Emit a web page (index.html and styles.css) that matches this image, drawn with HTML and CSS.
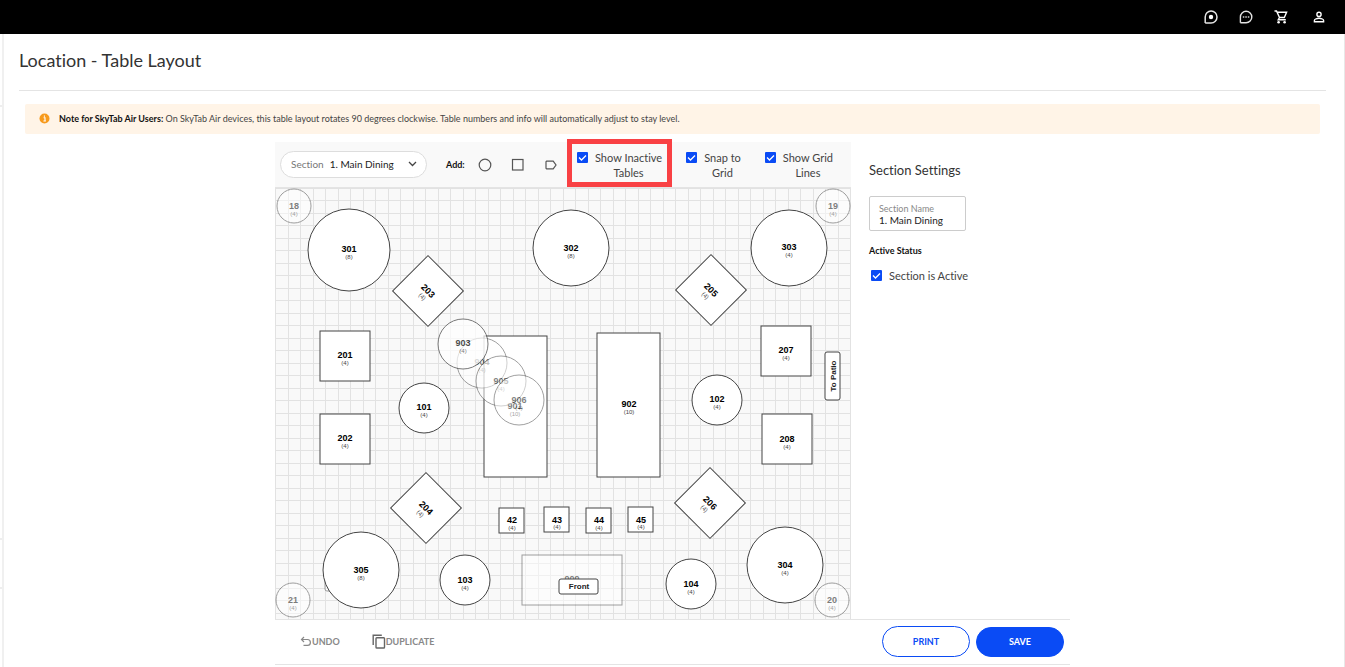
FILE: index.html
```html
<!DOCTYPE html>
<html lang="en">
<head>
<meta charset="utf-8">
<title>Location - Table Layout</title>
<meta name="viewport" content="width=device-width, initial-scale=1">
<link rel="stylesheet" href="styles.css">
</head>
<body>
<header class="topbar">
  <button class="icon-btn" type="button" aria-label="Activity"><svg width="14" height="14" viewBox="0 0 14 14"><path d="M1.2 13V7a5.9 5.9 0 1 1 5.9 5.9H1.2" fill="none" stroke="#e4e4e4" stroke-width="1.5"/><circle cx="7" cy="7" r="2.2" fill="#fff"/></svg></button>
  <button class="icon-btn" type="button" aria-label="Chat"><svg width="14" height="14" viewBox="0 0 14 14"><path d="M1.4 12.8V7a5.7 5.7 0 1 1 5.7 5.7H1.4" fill="none" stroke="#e4e4e4" stroke-width="1.4"/><path d="M3.8 6.3h1.5v1.4H3.8zM6.3 6.3h1.5v1.4H6.3zM8.8 6.3h1.5v1.4H8.8z" fill="#ccc"/></svg></button>
  <button class="icon-btn" type="button" aria-label="Cart"><svg width="14" height="14" viewBox="0 0 14 14"><path d="M.5 1h2l3 6.500h4.800L12.600 2.300H3.200M5.500 7.500 4.200 9.800h7.600" fill="none" stroke="#fff" stroke-width="1.400"/><circle cx="4.600" cy="12.300" r="1.300" fill="#fff"/><circle cx="10.600" cy="12.300" r="1.300" fill="#fff"/></svg></button>
  <button class="icon-btn" type="button" aria-label="Account"><svg width="14" height="14" viewBox="0 0 14 14"><circle cx="7" cy="4.400" r="2.100" fill="none" stroke="#fff" stroke-width="1.400"/><path d="M2.400 11.700v-1.200c0-1.500 3-2.200 4.600-2.200s4.600.7 4.600 2.200v1.200z" fill="none" stroke="#fff" stroke-width="1.400"/></svg></button>
</header>
<div class="shell">
  <nav class="rail" aria-label="Sidebar"><span class="rail-a"></span><span class="rail-b"></span><span class="rail-c"></span></nav>
  <main class="page">
    <h1 class="title">Location - Table Layout</h1>
    <p class="notice">
      <svg class="notice-icon" width="11" height="11" viewBox="0 0 11 11"><circle cx="5.500" cy="5.500" r="5" fill="#f79a1c"/><path d="M4.600 4.800h1.400v3M4.400 8h2.500M5.400 2.500v1.300" fill="none" stroke="#fff" stroke-width="1.100"/></svg>
      <span><strong>Note for SkyTab Air Users:</strong> On SkyTab Air devices, this table layout rotates 90 degrees clockwise. Table numbers and info will automatically adjust to stay level.</span>
    </p>
    <div class="editor">
      <section class="board">
        <div class="toolbar">
          <div class="section-pick">
            <label for="section">Section</label>
            <select id="section"><option>1. Main Dining</option></select>
          </div>
          <div class="add">
            <strong>Add:</strong>
            <button class="shape-btn" type="button" aria-label="Add round table"><svg width="14" height="14" viewBox="0 0 14 14"><circle cx="7" cy="7" r="5.800"/></svg></button>
            <button class="shape-btn" type="button" aria-label="Add square table"><svg width="14" height="14" viewBox="0 0 14 14"><rect x="1.500" y="1.500" width="10.500" height="10.500"/></svg></button>
            <button class="shape-btn" type="button" aria-label="Add label"><svg width="14" height="14" viewBox="0 0 14 14"><path d="M2.600 3.200h6.600l2.800 3.800-2.800 3.800H2.600l-.6-.6V3.800z"/></svg></button>
          </div>
          <div class="toggles">
            <label class="toggle highlighted"><input class="check" type="checkbox" checked><span>Show Inactive<br>Tables</span></label>
            <label class="toggle"><input class="check" type="checkbox" checked><span>Snap to<br>Grid</span></label>
            <label class="toggle"><input class="check" type="checkbox" checked><span>Show Grid<br>Lines</span></label>
          </div>
        </div>
        <svg class="floor" viewBox="0 0 576 431" role="img" aria-label="Main Dining floor plan">
          <defs>
            <pattern id="grid" width="25" height="25" patternUnits="userSpaceOnUse">
              <path class="grid-line" d="M0 0h25v1H0zM0 12h25v1H0zM0 0h1v25H0zM13 0h1v25h-1z"/>
            </pattern>
          </defs>
          <rect width="576" height="431" fill="url(#grid)"/>

          <g class="inactive"><circle cx="19" cy="18" r="17"/><text class="num" x="19" y="21">18</text><text class="seats" x="19" y="28">(4)</text></g>
          <g class="inactive"><circle cx="558" cy="18" r="17"/><text class="num" x="558" y="21">19</text><text class="seats" x="558" y="28">(4)</text></g>
          <g class="inactive"><circle cx="18" cy="412" r="17"/><text class="num" x="18" y="415">21</text><text class="seats" x="18" y="422">(4)</text></g>
          <g class="inactive"><circle cx="557" cy="412" r="17"/><text class="num" x="557" y="415">20</text><text class="seats" x="557" y="422">(4)</text></g>
          <g class="inactive"><rect x="50" y="388" width="39" height="15" rx="2"/></g>
          <g class="inactive"><rect x="247" y="367" width="100" height="50"/><text class="num" x="297" y="394">909</text></g>

          <g><circle cx="74" cy="62" r="41"/><text class="num" x="74" y="64">301</text><text class="seats" x="74" y="71">(8)</text></g>
          <g><circle cx="296" cy="60" r="38"/><text class="num" x="296" y="63">302</text><text class="seats" x="296" y="70">(8)</text></g>
          <g><circle cx="514" cy="60" r="38"/><text class="num" x="514" y="62">303</text><text class="seats" x="514" y="69">(4)</text></g>
          <g><circle cx="510" cy="377" r="38"/><text class="num" x="510" y="380">304</text><text class="seats" x="510" y="387">(4)</text></g>
          <g><circle cx="86" cy="382" r="38"/><text class="num" x="86" y="385">305</text><text class="seats" x="86" y="392">(8)</text></g>

          <g transform="translate(153 103) rotate(45)"><rect x="-25" y="-25" width="50" height="50"/><text class="num" x="0" y="3">203</text><text class="seats" x="0" y="10">(4)</text></g>
          <g transform="translate(436 102) rotate(45)"><rect x="-25" y="-25" width="50" height="50"/><text class="num" x="0" y="3">205</text><text class="seats" x="0" y="10">(4)</text></g>
          <g transform="translate(151 320) rotate(45)"><rect x="-25" y="-25" width="50" height="50"/><text class="num" x="0" y="3">204</text><text class="seats" x="0" y="10">(4)</text></g>
          <g transform="translate(435 315) rotate(45)"><rect x="-25" y="-25" width="50" height="50"/><text class="num" x="0" y="3">206</text><text class="seats" x="0" y="10">(4)</text></g>

          <g class="square"><rect x="45" y="143" width="50" height="50"/><text class="num" x="70" y="170">201</text><text class="seats" x="70" y="177">(4)</text></g>
          <g class="square"><rect x="45" y="226" width="50" height="50"/><text class="num" x="70" y="253">202</text><text class="seats" x="70" y="260">(4)</text></g>
          <g class="square"><rect x="486" y="138" width="50" height="50"/><text class="num" x="511" y="165">207</text><text class="seats" x="511" y="172">(4)</text></g>
          <g class="square"><rect x="487" y="226" width="50" height="50"/><text class="num" x="512" y="254">208</text><text class="seats" x="512" y="261">(4)</text></g>

          <g><circle cx="149" cy="220" r="25"/><text class="num" x="149" y="222">101</text><text class="seats" x="149" y="229">(4)</text></g>
          <g><circle cx="442" cy="212" r="25"/><text class="num" x="442" y="214">102</text><text class="seats" x="442" y="221">(4)</text></g>
          <g><circle cx="190" cy="392" r="25"/><text class="num" x="190" y="395">103</text><text class="seats" x="190" y="402">(4)</text></g>
          <g><circle cx="416" cy="396" r="25"/><text class="num" x="416" y="399">104</text><text class="seats" x="416" y="406">(4)</text></g>

          <g class="square"><rect x="209" y="148" width="63" height="141"/><text class="num" x="240" y="221">901</text><text class="seats" x="240" y="228">(10)</text></g>
          <g class="square"><rect x="322" y="145" width="63" height="144"/><text class="num" x="354" y="219">902</text><text class="seats" x="354" y="226">(10)</text></g>

          <g class="inactive"><circle cx="207" cy="175" r="25"/><text class="num" x="207" y="177">904</text><text class="seats" x="207" y="184">(4)</text></g>
          <g class="inactive"><circle cx="226" cy="193" r="25"/><text class="num" x="226" y="196">905</text><text class="seats" x="226" y="203">(4)</text></g>
          <g class="inactive"><circle cx="244" cy="212" r="25"/><text class="num" x="244" y="215">906</text><text class="seats" x="244" y="222">(4)</text></g>
          <g class="inactive front"><circle cx="188" cy="156" r="25"/><text class="num" x="188" y="158">903</text><text class="seats" x="188" y="165">(4)</text></g>

          <g class="square"><rect x="224" y="320" width="25" height="25"/><text class="num" x="237" y="335">42</text><text class="seats" x="237" y="342">(4)</text></g>
          <g class="square"><rect x="269" y="319" width="25" height="25"/><text class="num" x="282" y="335">43</text><text class="seats" x="282" y="341">(4)</text></g>
          <g class="square"><rect x="311" y="320" width="25" height="25"/><text class="num" x="324" y="335">44</text><text class="seats" x="324" y="342">(4)</text></g>
          <g class="square"><rect x="353" y="319" width="25" height="25"/><text class="num" x="366" y="335">45</text><text class="seats" x="366" y="341">(4)</text></g>

          <g><rect x="284" y="391" width="39" height="15" rx="2"/><text class="tag" x="304" y="401">Front</text></g>
          <g transform="translate(558 188) rotate(-90)"><rect x="-24" y="-8" width="48" height="15" rx="2"/><text class="tag" x="0" y="3">To Patio</text></g>
        </svg>
      </section>
      <aside class="settings">
        <h2 class="settings-title">Section Settings</h2>
        <div class="field">
          <label for="name">Section Name</label>
          <input id="name" type="text" value="1. Main Dining">
        </div>
        <h3 class="status-title">Active Status</h3>
        <label class="status"><input class="check" type="checkbox" checked>Section is Active</label>
      </aside>
      <footer class="actions">
        <button class="text-btn" type="button"><svg width="12" height="12" viewBox="0 0 12 12"><path d="M4 1 1.500 3.500 4 6M1.500 3.500H7.500a2.900 2.900 0 0 1 0 5.800H3.500" fill="none" stroke="#888" stroke-width="1.200"/></svg>UNDO</button>
        <button class="text-btn duplicate" type="button"><svg width="14" height="15" viewBox="0 0 14 15"><path d="M1.200 11V1.200h8.600" fill="none" stroke="#666" stroke-width="1.400"/><rect x="4" y="3.700" width="8.500" height="10.300" rx=".8" fill="none" stroke="#666" stroke-width="1.400"/></svg>DUPLICATE</button>
        <button class="pill-btn print" type="button">PRINT</button>
        <button class="pill-btn save" type="button">SAVE</button>
      </footer>
    </div>
  </main>
</div>
</body>
</html>
```
FILE: styles.css
```css
* { box-sizing: border-box; }
body {
  margin: 0;
  min-height: 100vh;
  display: flex;
  flex-direction: column;
  font-family: Lato, "Open Sans", sans-serif;
  font-size: 11px;
  font-variant-ligatures: none;
  color: #444;
  background: #fff;
}
button, input, select { font: inherit; color: inherit; }
button { border: 0; padding: 0; background: none; cursor: pointer; }
svg { display: block; }

.topbar {
  height: 34px;
  padding: 0 19px 1px;
  display: flex;
  align-items: center;
  justify-content: flex-end;
  gap: 21px;
  background: #000;
}
.icon-btn:last-child { margin-left: 3px; }

.shell { flex: 1; display: flex; border-right: 1px solid #e8e8e8; }
.rail {
  width: 4px;
  display: grid;
  grid-template-rows: 73px 433px 49px 1fr;
  border-right: 2px solid #f0f0f0;
}
.rail-a, .rail-b, .rail-c { border-bottom: 2px solid #eee; }
.page { flex: 1; padding: 0 18px 0 15px; }
.title {
  margin: 0;
  height: 57px;
  line-height: 53px;
  font-size: 18px;
  font-weight: 400;
  color: #333;
  border-bottom: 1px solid #e4e4e4;
}
.notice {
  margin: 13px 6px 8px;
  min-height: 30px;
  padding: 0 14px 2px;
  display: flex;
  align-items: center;
  gap: 9px;
  font-size: 9px;
  color: #444;
  background: #fff4e7;
  border-radius: 2px;
}
.notice strong { color: #111; }

.editor {
  max-width: 795px;
  margin: 0 auto;
  display: grid;
  grid-template-columns: 576fr 219fr;
}
.toolbar {
  height: 46px;
  padding: 0 18px 0 5px;
  display: flex;
  align-items: center;
  background: #f9f9f9;
  border-bottom: 1px solid #e4e4e4;
}
.section-pick {
  width: 147px;
  height: 27px;
  padding: 0 9px 1px 10px;
  display: flex;
  align-items: center;
  gap: 6px;
  font-size: 10px;
  background: #fff;
  border: 1px solid #ddd;
  border-radius: 14px;
}
.section-pick label { color: #777; }
.section-pick select {
  flex: 1;
  min-width: 0;
  padding: 0;
  border: 0;
  appearance: none;
  color: #222;
  background: url("data:image/svg+xml,%3Csvg xmlns='http://www.w3.org/2000/svg' width='9' height='6'%3E%3Cpath d='M1 1l3.500 3.500L8 1' fill='none' stroke='%23444' stroke-width='1.300'/%3E%3C/svg%3E") right center no-repeat;
}
.add {
  margin-left: 19px;
  display: flex;
  align-items: center;
  font-size: 9px;
  color: #111;
}
.add strong { width: 32px; }
.shape-btn { margin-right: 19px; }
.shape-btn svg { fill: none; stroke: #555; stroke-width: 1.2; }
.toggles { flex: 1; display: flex; justify-content: space-between; }
.toggle {
  position: relative;
  display: flex;
  gap: 7px;
  line-height: 15px;
  text-align: center;
}
.highlighted::after {
  content: "";
  position: absolute;
  inset: -11px -10px -7px;
  border: 5px solid #f94144;
}
.check {
  flex: none;
  width: 11px;
  height: 11px;
  margin: 2px 0 0;
  appearance: none;
  border-radius: 1px;
  background: #0a4bf5 url("data:image/svg+xml,%3Csvg xmlns='http://www.w3.org/2000/svg' width='11' height='11'%3E%3Cpath d='M2 5.500l2.500 2.500L9 3.500' fill='none' stroke='white' stroke-width='1.300'/%3E%3C/svg%3E");
}

.floor {
  width: 100%;
  height: auto;
  background: #f9f9f9;
  font-family: "Liberation Sans", Arial, sans-serif;
  text-anchor: middle;
}
.grid-line { fill: #e2e2e2; }
.floor g circle, .floor g rect { fill: #fff; stroke: #444; stroke-width: 1; }
.num { font-size: 9px; font-weight: 700; fill: #000; }
.seats { font-size: 6px; fill: #444; }
.tag { font-size: 8px; font-weight: 700; fill: #222; }
.inactive { opacity: 0.5; }
.inactive.front { opacity: 0.7; }

.settings { padding: 20px 18px 0; }
.settings-title {
  margin: 0 0 18px;
  font-size: 13px;
  line-height: 16px;
  font-weight: 400;
  color: #333;
}
.field {
  width: 97px;
  height: 35px;
  padding: 6px 9px 0;
  border: 1px solid #ccc;
  border-radius: 2px;
}
.field label { display: block; font-size: 9px; line-height: 11px; color: #888; }
.field input {
  display: block;
  width: 100%;
  height: 12px;
  padding: 0;
  border: 0;
  outline: 0;
  font-size: 10px;
  color: #222;
}
.status-title { margin: 14px 0 11px; font-size: 9px; line-height: 12px; color: #111; }
.status { display: flex; gap: 7px; padding-left: 2px; line-height: 15px; }

.actions {
  grid-column: 1 / -1;
  height: 46px;
  padding: 0 6px 1px 25px;
  display: flex;
  align-items: center;
  border: solid #e4e4e4;
  border-width: 1px 0;
}
.text-btn {
  display: flex;
  align-items: center;
  font-size: 9px;
  font-weight: 700;
  color: #888;
}
.duplicate { margin-left: 32px; }
.pill-btn {
  width: 88px;
  height: 31px;
  border: 1px solid #0a4bf5;
  border-radius: 16px;
  font-size: 9px;
  font-weight: 700;
}
.print { margin-left: auto; color: #0a4bf5; }
.save { height: 30px; margin-left: 6px; color: #fff; background: #0a4bf5; }
```
